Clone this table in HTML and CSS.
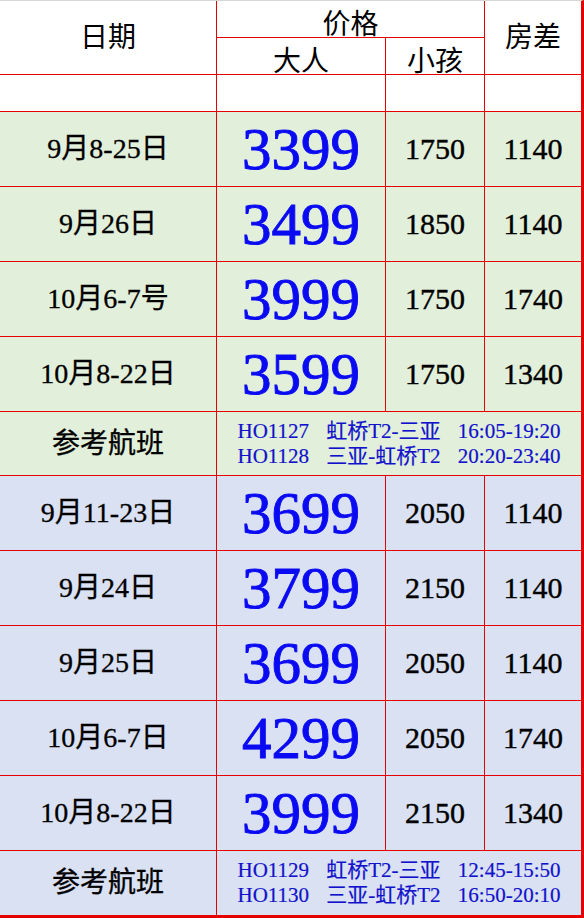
FILE: index.html
```html
<!DOCTYPE html>
<html lang="zh-CN">
<head>
<meta charset="utf-8">
<title>价格表</title>
<link rel="stylesheet" href="styles.css">
</head>
<body>
<div class="sheet">
<table class="price">
  <colgroup><col class="c1"><col class="c2"><col class="c3"><col class="c4"></colgroup>
  <thead>
    <tr class="h1"><th rowspan="2" class="head-big">日期</th><th colspan="2" class="head top">价格</th><th rowspan="2" class="right head-big">房差</th></tr>
    <tr class="h2"><th class="head sub">大人</th><th class="head sub">小孩</th></tr>
    <tr class="blank"><td></td><td></td><td></td><td class="right"></td></tr>
  </thead>
  <tbody class="green">
    <tr class="data"><td class="date">9月8-25日</td><td class="adult">3399</td><td class="num">1750</td><td class="right num">1140</td></tr>
    <tr class="data"><td class="date">9月26日</td><td class="adult">3499</td><td class="num">1850</td><td class="right num">1140</td></tr>
    <tr class="data"><td class="date">10月6-7号</td><td class="adult">3999</td><td class="num">1750</td><td class="right num">1740</td></tr>
    <tr class="data"><td class="date">10月8-22日</td><td class="adult">3599</td><td class="num">1750</td><td class="right num">1340</td></tr>
    <tr class="flight"><td class="date">参考航班</td><td colspan="3" class="right fl">HO1127 虹桥T2-三亚 16:05-19:20<br>HO1128 三亚-虹桥T2 20:20-23:40</td></tr>
  </tbody>
  <tbody class="blue">
    <tr class="data"><td class="date">9月11-23日</td><td class="adult">3699</td><td class="num">2050</td><td class="right num">1140</td></tr>
    <tr class="data"><td class="date">9月24日</td><td class="adult">3799</td><td class="num">2150</td><td class="right num">1140</td></tr>
    <tr class="data"><td class="date">9月25日</td><td class="adult">3699</td><td class="num">2050</td><td class="right num">1140</td></tr>
    <tr class="data"><td class="date">10月6-7日</td><td class="adult">4299</td><td class="num">2050</td><td class="right num">1740</td></tr>
    <tr class="data"><td class="date">10月8-22日</td><td class="adult">3999</td><td class="num">2150</td><td class="right num">1340</td></tr>
    <tr class="flight last"><td class="date">参考航班</td><td colspan="3" class="right fl">HO1129 虹桥T2-三亚 12:45-15:50<br>HO1130 三亚-虹桥T2 16:50-20:10</td></tr>
  </tbody>
</table>
</div>
</body>
</html>
```
FILE: styles.css
```css
html, body {
  margin: 0;
  padding: 0;
  background: #ffffff;
}

.sheet {
  width: 584px;
  height: 918px;
  box-sizing: border-box;
  border-top: 1px solid #d6d6d6;
  border-right: 3px solid #e60000;
  border-bottom: 3px solid #e60000;
  overflow: hidden;
  background: #ffffff;
}

.price {
  width: 581px;
  border-collapse: separate;
  border-spacing: 0;
  table-layout: fixed;
  font-family: "Liberation Serif", "Noto Sans CJK SC", serif;
  color: #000000;
}

.c1 { width: 217px; }
.c2 { width: 169px; }
.c3 { width: 99px; }
.c4 { width: 96px; }

.price th,
.price td {
  border: 0;
  border-right: 1px solid #e60000;
  border-bottom: 1px solid #e60000;
  padding: 0;
  text-align: center;
  vertical-align: middle;
  font-weight: normal;
}

.price .right { border-right: none; }
.last td { border-bottom: none; }

.h1 { height: 37px; }
.h2 { height: 37px; }
.blank { height: 37px; }
.data { height: 75px; }
.flight { height: 64px; }

.head {
  font-size: 28px;
  line-height: 20px;
}

.head.top { padding-top: 12px; }
.head.sub { padding-top: 12px; }

.head-big {
  font-size: 28px;
  line-height: 28px;
  padding-top: 17px;
}

.green td { background: #e2efda; }
.blue td { background: #d9e1f2; }

.date {
  font-size: 28px;
  line-height: 28px;
  padding-top: 10px;
  -webkit-text-stroke: 0.3px #000000;
}

.adult {
  font-size: 59px;
  line-height: 48px;
  color: #0a0af2;
  padding-top: 23px;
  -webkit-text-stroke: 0.9px #0a0af2;
}

.num {
  font-size: 30px;
  line-height: 30px;
  padding-top: 11px;
  -webkit-text-stroke: 0.4px #000000;
}

.fl {
  text-align: left;
  padding-left: 21px;
  padding-top: 4px;
  font-size: 21px;
  line-height: 25px;
  color: #1212cc;
  word-spacing: 12px;
  white-space: nowrap;
  -webkit-text-stroke: 0.2px #1212cc;
}
```
